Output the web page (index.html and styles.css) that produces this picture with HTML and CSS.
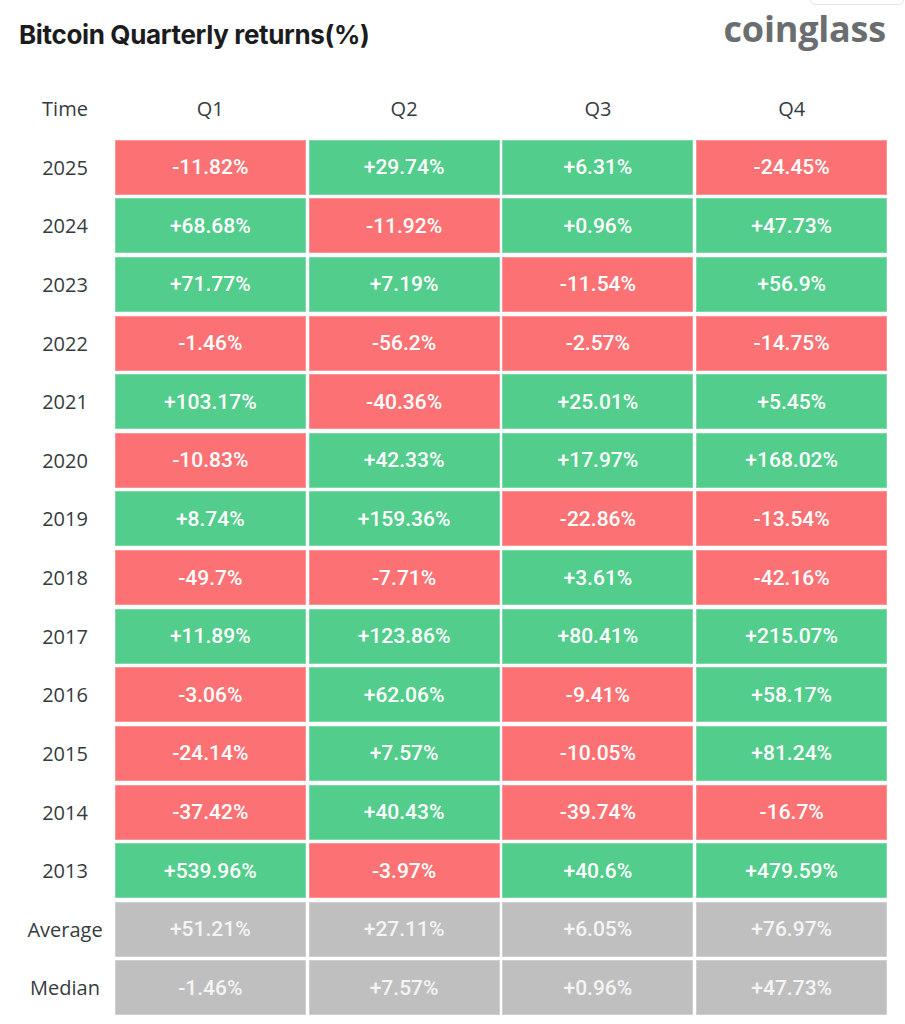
FILE: index.html
```html
<!DOCTYPE html>
<html>
<head>
<meta charset="utf-8">
<link rel="stylesheet" href="styles.css">
</head>
<body>
<div class="page">
  <div class="tab"></div>
  <header class="top">
    <h1 class="title">Bitcoin Quarterly returns(%)</h1>
    <div class="logo">coinglass</div>
  </header>
  <div class="grid">
    <div class="lbl">Time</div><div class="hd">Q1</div><div class="hd">Q2</div><div class="hd">Q3</div><div class="hd">Q4</div>

    <div class="lbl">2025</div><div class="c neg">-11.82%</div><div class="c pos">+29.74%</div><div class="c pos">+6.31%</div><div class="c neg">-24.45%</div>
    <div class="lbl">2024</div><div class="c pos">+68.68%</div><div class="c neg">-11.92%</div><div class="c pos">+0.96%</div><div class="c pos">+47.73%</div>
    <div class="lbl">2023</div><div class="c pos">+71.77%</div><div class="c pos">+7.19%</div><div class="c neg">-11.54%</div><div class="c pos">+56.9%</div>
    <div class="lbl">2022</div><div class="c neg">-1.46%</div><div class="c neg">-56.2%</div><div class="c neg">-2.57%</div><div class="c neg">-14.75%</div>
    <div class="lbl">2021</div><div class="c pos">+103.17%</div><div class="c neg">-40.36%</div><div class="c pos">+25.01%</div><div class="c pos">+5.45%</div>
    <div class="lbl">2020</div><div class="c neg">-10.83%</div><div class="c pos">+42.33%</div><div class="c pos">+17.97%</div><div class="c pos">+168.02%</div>
    <div class="lbl">2019</div><div class="c pos">+8.74%</div><div class="c pos">+159.36%</div><div class="c neg">-22.86%</div><div class="c neg">-13.54%</div>
    <div class="lbl">2018</div><div class="c neg">-49.7%</div><div class="c neg">-7.71%</div><div class="c pos">+3.61%</div><div class="c neg">-42.16%</div>
    <div class="lbl">2017</div><div class="c pos">+11.89%</div><div class="c pos">+123.86%</div><div class="c pos">+80.41%</div><div class="c pos">+215.07%</div>
    <div class="lbl">2016</div><div class="c neg">-3.06%</div><div class="c pos">+62.06%</div><div class="c neg">-9.41%</div><div class="c pos">+58.17%</div>
    <div class="lbl">2015</div><div class="c neg">-24.14%</div><div class="c pos">+7.57%</div><div class="c neg">-10.05%</div><div class="c pos">+81.24%</div>
    <div class="lbl">2014</div><div class="c neg">-37.42%</div><div class="c pos">+40.43%</div><div class="c neg">-39.74%</div><div class="c neg">-16.7%</div>
    <div class="lbl">2013</div><div class="c pos">+539.96%</div><div class="c neg">-3.97%</div><div class="c pos">+40.6%</div><div class="c pos">+479.59%</div>
    <div class="lbl">Average</div><div class="c avg">+51.21%</div><div class="c avg">+27.11%</div><div class="c avg">+6.05%</div><div class="c avg">+76.97%</div>
    <div class="lbl">Median</div><div class="c avg">-1.46%</div><div class="c avg">+7.57%</div><div class="c avg">+0.96%</div><div class="c avg">+47.73%</div>
  </div>
</div>
</body>
</html>
```
FILE: styles.css
```css
html, body {
  margin: 0;
  padding: 0;
  background: #ffffff;
}
.page {
  position: relative;
  width: 905px;
  height: 1024px;
  overflow: hidden;
  padding: 0 0 0 14px;
  box-sizing: border-box;
}
.tab {
  position: absolute;
  left: 810px;
  top: -10px;
  width: 92px;
  height: 13px;
  border: 1px solid #dfe6ee;
  border-radius: 5px;
}
.top {
  display: flex;
  justify-content: space-between;
  align-items: flex-start;
  padding: 0 19px 0 5px;
  height: 80px;
}
.title {
  margin: 19px 0 0 0;
  font-family: Inter, "Liberation Sans", sans-serif;
  font-weight: 700;
  font-size: 26px;
  letter-spacing: -0.35px;
  color: #1b1c1e;
  line-height: 32px;
}
.logo {
  margin-top: 6px;
  font-family: "Open Sans", sans-serif;
  font-weight: 700;
  font-size: 36px;
  letter-spacing: -0.2px;
  color: #6b6e70;
  line-height: 46px;
}
.grid {
  display: grid;
  grid-template-columns: 98px repeat(4, 191px);
  grid-template-rows: 56px repeat(15, 55px);
  column-gap: 2.8px;
  row-gap: 3.64px;
}
.hd, .lbl {
  display: flex;
  align-items: center;
  justify-content: center;
  font-family: "Open Sans", sans-serif;
  font-size: 20px;
  color: #363b40;
}
.lbl {
  padding-left: 4px;
}
.c {
  display: flex;
  align-items: center;
  justify-content: center;
  font-family: Roboto, sans-serif;
  font-weight: 500;
  font-size: 21px;
  color: #ffffff;
  box-shadow: inset 0 0 0 1px rgba(255, 255, 255, 0.25);
}
.neg { background: #fc7274; }
.pos { background: #52cd8c; }
.avg { background: #bfbfbf; color: #f4f4f4; }
```
